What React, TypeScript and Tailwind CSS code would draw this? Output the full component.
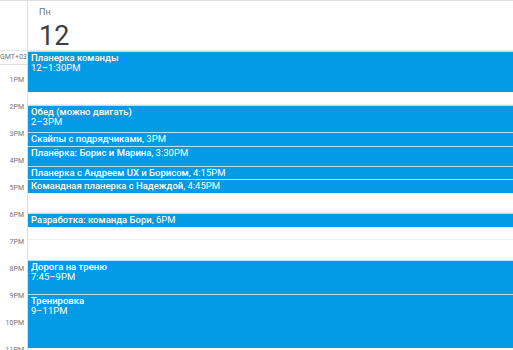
import React from 'react';

type CalEvent = {
  title: string;
  time: string;
  start: number; // hours after 12PM
  end: number;
  twoLine?: boolean;
};

const HOUR = 27;

const events: CalEvent[] = [
  { title: 'Планерка команды', time: '12–1:30PM', start: 0, end: 1.5, twoLine: true },
  { title: 'Обед (можно двигать)', time: '2–3PM', start: 2, end: 3, twoLine: true },
  { title: 'Скайпы с подрядчиками', time: '3PM', start: 3, end: 3.5 },
  { title: 'Планёрка: Борис и Марина', time: '3:30PM', start: 3.5, end: 4.25 },
  { title: 'Планерка с Андреем UX и Борисом', time: '4:15PM', start: 4.25, end: 4.75 },
  { title: 'Командная планерка с Надеждой', time: '4:45PM', start: 4.75, end: 5.25 },
  { title: 'Разработка: команда Бори', time: '6PM', start: 6, end: 6.5 },
  { title: 'Дорога на треню', time: '7:45–9PM', start: 7.75, end: 9, twoLine: true },
  { title: 'Тренировка', time: '9–11PM', start: 9, end: 11, twoLine: true },
];

const hours = ['1PM', '2PM', '3PM', '4PM', '5PM', '6PM', '7PM', '8PM', '9PM', '10PM', '11PM'];

function EventBlock({ ev }: { ev: CalEvent }) {
  return (
    <div
      className="absolute left-0 right-0 overflow-hidden bg-[#039be5] border-t border-[#b5e0f6] px-[3px] pt-[1px] text-white text-[9.5px] leading-[10px]"
      style={{ top: ev.start * HOUR, height: (ev.end - ev.start) * HOUR }}
    >
      {ev.twoLine ? (
        <>
          <div className="font-medium truncate">{ev.title}</div>
          <div>{ev.time}</div>
        </>
      ) : (
        <div className="truncate">
          <span className="font-medium">{ev.title}</span>, {ev.time}
        </div>
      )}
    </div>
  );
}

export default function App() {
  return (
    <div className="w-[513px] h-[350px] overflow-hidden bg-white border-t border-[#e0e0e0] font-['Roboto',sans-serif]">
      {/* Header */}
      <div className="flex h-[50px] border-b border-[#e8e8e8]">
        <div className="w-[28px] shrink-0 border-r border-[#e0e0e0]" />
        <div className="flex-1 pl-[11px] pt-[5px]">
          <div className="text-[9px] leading-[12px] text-[#70757a]">Пн</div>
          <div className="mt-[3px] text-[27px] leading-[30px] text-[#3c4043]">12</div>
        </div>
      </div>

      {/* Body */}
      <div className="flex">
        <div className="w-[28px] shrink-0 border-r border-[#e0e0e0] text-[7px] leading-[8px] text-[#70757a] text-right">
          <div className="h-[25px] pt-[2px]">
            <div className="border-b border-[#e0e0e0] pb-[3px] pr-[1px] whitespace-nowrap">GMT+03</div>
          </div>
          {hours.map((h) => (
            <div key={h} className="h-[27px] pr-[3px]">
              {h}
            </div>
          ))}
        </div>

        <div className="relative flex-1">
          {Array.from({ length: 11 }).map((_, i) => (
            <div key={i} className="h-[27px] border-b border-[#eeeeee]" />
          ))}
          {events.map((ev, i) => (
            <EventBlock ev={ev} key={i} />
          ))}
        </div>
      </div>
    </div>
  );
}
